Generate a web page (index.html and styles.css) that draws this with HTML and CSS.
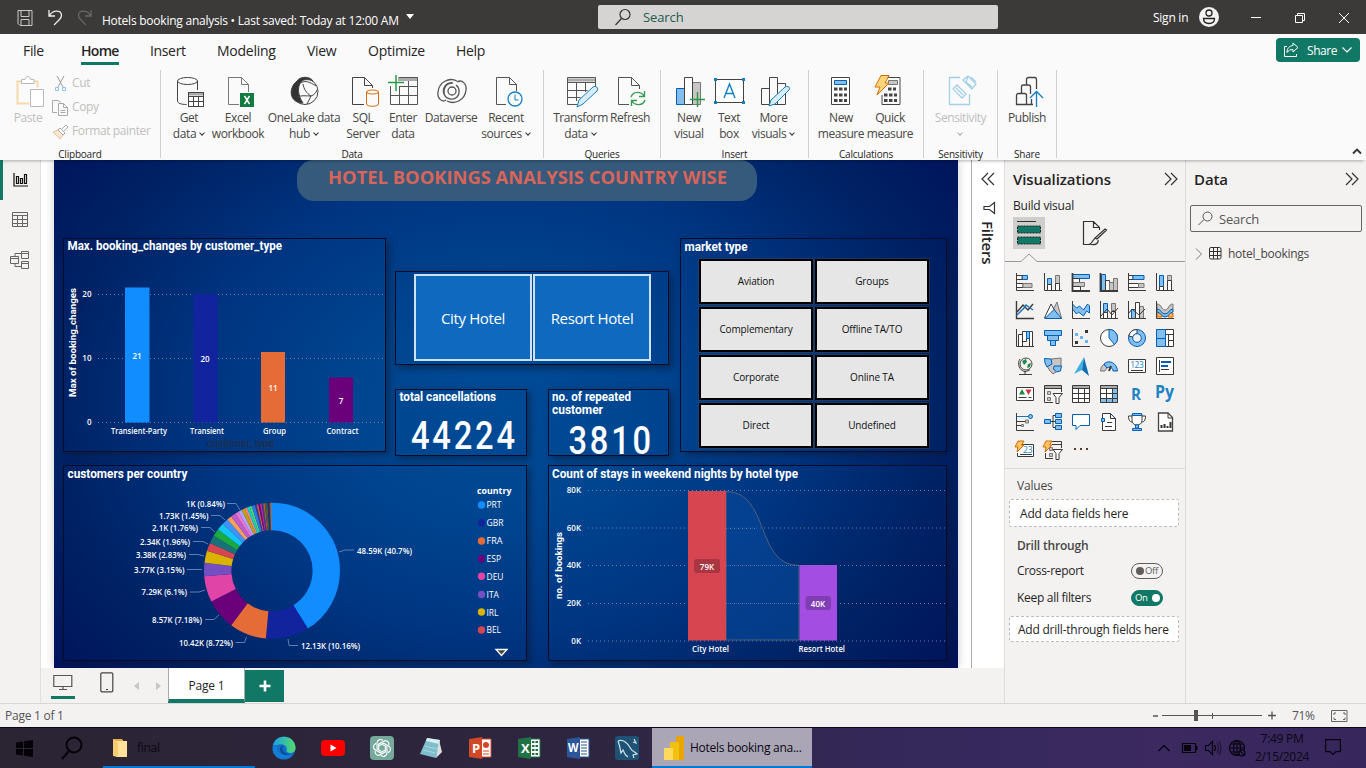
FILE: index.html
```html
<!DOCTYPE html>
<html lang="en">
<head>
<meta charset="utf-8">
<title>Hotels booking analysis</title>
<link rel="stylesheet" href="styles.css">
</head>
<body>
<div class="app">
<header class="titlebar">
  <svg class="tb-icons" width="84" height="34" viewBox="14 0 84 34" fill="none" stroke="#f0efee">
    <path d="M18 10.500h14v15H20l-2-2zM21 10.500v6h8v-6M21 25v-5.500h8V25" stroke="#c9c8c7"/>
    <path d="M49 10v6h6M49.500 15.500C53 9.500 61 10 61.500 15c.2 2-1 3.500-2.500 5l-5 5" stroke-width="1.300"/>
    <path d="M91 10v6h-6M90.500 15.500C87 9.500 79 10 78.500 15c-.2 2 1 3.500 2.500 5l5 5" stroke="#696765" stroke-width="1.300"/>
  </svg>
  <div class="doc-name">Hotels booking analysis • Last saved: Today at 12:00 AM</div>
  <svg class="caret" width="10" height="6" viewBox="0 0 10 6"><path d="M1 0h8L5 5z" fill="#fff"/></svg>
  <div class="top-search">
    <svg width="18" height="18" viewBox="0 0 18 18" fill="none" stroke="#333" stroke-width="1.200"><circle cx="11" cy="6.500" r="5"/><path d="M7.500 10.500L1.500 17"/></svg>
    <span>Search</span>
  </div>
  <div class="sign-in">Sign in</div>
  <svg class="avatar" width="20" height="20" viewBox="0 0 20 20"><circle cx="10" cy="10" r="10" fill="#f3f2f1"/><circle cx="10" cy="6" r="3" fill="none" stroke="#222" stroke-width="1.300"/><path d="M4.500 11.500h11c0 3.300-2.300 5-5.500 5s-5.500-1.700-5.500-5z" fill="none" stroke="#222" stroke-width="1.300"/></svg>
  <svg class="win-ctl" width="100" height="34" viewBox="1250 0 100 34" fill="none" stroke="#fff"><path d="M1251 17.500h10M1295.500 15.500h7v7h-7zM1297.500 15.500v-2h7v7h-2M1339 13l10 10M1349 13l-10 10"/></svg>
</header>

<nav class="tabs">
  <a class="tab t-file">File</a><a class="tab t-home current">Home</a><a class="tab t-insert">Insert</a><a class="tab t-model">Modeling</a><a class="tab t-view">View</a><a class="tab t-opt">Optimize</a><a class="tab t-help">Help</a>
  <div class="share">
    <svg width="17" height="16" viewBox="0 0 17 16" fill="none" stroke="#fff"><path d="M4 4.500H1.500v10h12V12"/><path d="M10 1l5 4.500L10 10V7.500c-3 0-4.500 1-6 3 0-4 2-6.500 6-7z"/></svg>
    <span>Share</span>
    <svg width="10" height="6" viewBox="0 0 10 6" fill="none" stroke="#fff" stroke-width="1.200"><path d="M.5.5L5 5 9.500.5"/></svg>
  </div>
</nav>

<section class="ribbon">
  <div class="group g-clip">
    <div class="buttons">
      <div class="btn w-paste off"><svg width="32" height="32" viewBox="12 74 32 32" fill="none"><path d="M21 80.500h-3.500v22H29" stroke="#f5d9a8" stroke-width="2"/><path d="M34 80.500h3.500v6" stroke="#f5d9a8" stroke-width="2"/><path d="M21.500 82.500v-4H25c0-4 5.500-4 5.500 0H34v4zM30.500 88.500h13v17h-13z" fill="#fff" stroke="#b9b9b9"/></svg><span>Paste</span></div>
      <div class="clip-list off">
        <div><svg width="17" height="17" viewBox="0 0 17 17" fill="none"><path d="M5 1l6 11M12 1L6 12" stroke="#999"/><path d="M3.500 12.500h3v3h-3zM10.500 12.500h3v3h-3z" stroke="#8cc1e8"/></svg>Cut</div>
        <div><svg width="17" height="17" viewBox="0 0 17 17" fill="none" stroke="#aaa"><path d="M5 13.500H.5V1.500H6l3 2"/><path d="M6.500 4.500h5l4 4v8h-9zM11.500 4.500v4h4M8.500 11.500h5M8.500 13.500h5"/></svg>Copy</div>
        <div><svg width="17" height="17" viewBox="0 0 17 17" fill="none"><path d="M1 9l5-2 5 5-3 4z" fill="#fbe6cf" stroke="#edbd92"/><path d="M6 7l2-2 5 5-2 2zM10 6l4-4 2 2-4 4" stroke="#aaa"/></svg>Format painter</div>
      </div>
    </div>
    <div class="gname">Clipboard</div>
  </div>

  <div class="group g-data">
    <div class="buttons">
      <div class="btn w42"><svg width="32" height="32" viewBox="0 0 32 32" fill="none" stroke="#444"><ellipse cx="14.500" cy="6" rx="10" ry="3.500"/><path d="M4.500 6v20c0 2 3 3.500 9 3.500M24.500 6v9"/><path d="M15.500 17.500h15v14h-15z" fill="#fff"/><path d="M15 19h16" stroke-width="3" stroke="#aaa"/><path d="M15.500 17.500h15v14h-15zM15.500 21.500h15M15.500 26.500h15M20.500 21v10M25.500 21v10"/></svg><span>Get<br>data<i class="chev"></i></span></div>
      <div class="btn w56"><svg width="32" height="32" viewBox="0 0 32 32" fill="none" stroke="#777"><path d="M17 29.500H6.500v-27h13l7 7V17M19.500 2.500v7h7"/><path d="M18 18h14v14H18z" fill="#107c41" stroke="none"/><path d="M22.500 21l5 8M27.500 21l-5 8" stroke="#fff" stroke-width="1.500"/></svg><span>Excel<br>workbook</span></div>
      <div class="btn w76"><svg width="32" height="32" viewBox="0 0 32 32" fill="none" stroke="#444"><circle cx="17" cy="16.500" r="13"/><path d="M9 6C12 1 22 1 25 6c-5-2-9-2-12 1C9 12 10 21 15 28 1 28 0 13 9 6z" fill="#333"/><path d="M13 8c4-3 9-1 15 3M15 9c1 5 3 9 8 12M9 22c5-2 9-1 14-1 3-1 5-3 6-6M23 21l-4 8"/></svg><span>OneLake data<br>hub<i class="chev"></i></span></div>
      <div class="btn w42"><svg width="32" height="32" viewBox="0 0 32 32" fill="none" stroke="#444"><path d="M17 29.500H5.500v-27h12l8 8V13M17.500 2.500v8h8"/><ellipse cx="25.500" cy="17" rx="6" ry="2" stroke="#d8690a"/><path d="M19.500 17v12c0 3 12 3 12 0V17" stroke="#d8690a"/></svg><span>SQL<br>Server</span></div>
      <div class="btn w38"><svg width="32" height="32" viewBox="0 0 32 32" fill="none" stroke="#555"><path d="M11 4h20" stroke="#aaa" stroke-width="4"/><path d="M12 2.500h18.500v27h-27V11M3.500 20.500h27M12 11.500h18.500M12.500 12v17M21.500 6v23"/><path d="M9 0v16M1 7.500h16" stroke="#259b48" stroke-width="1.500"/></svg><span>Enter<br>data</span></div>
      <div class="btn w58"><svg width="32" height="32" viewBox="0 0 32 32" fill="none" stroke="#555" stroke-width="1.300"><circle cx="17" cy="16" r="4"/><path d="M18 8c-7-1-11 5-9 11 2 5 9 7 13 3 3-3 3-9-1-12"/><path d="M22 6c-8-4-18 1-19 11-1 6 4 11 8 8M12 26c8 4 18-1 19-11 1-6-4-11-9-8M9 19c-1-5 2-11 8-11"/></svg><span>Dataverse</span></div>
      <div class="btn w52"><svg width="32" height="32" viewBox="0 0 32 32" fill="none" stroke="#555"><path d="M16 29.500H6.500v-27h13l7 7V16M19.500 2.500v7h7"/><circle cx="25" cy="24" r="7" fill="#fafafa" stroke="#147fc4" stroke-width="1.300"/><path d="M25 19.500V25h3.500" stroke="#147fc4"/></svg><span>Recent<br>sources<i class="chev"></i></span></div>
    </div>
    <div class="gname">Data</div>
  </div>

  <div class="group g-query">
    <div class="buttons">
      <div class="btn w55"><svg width="32" height="32" viewBox="0 0 32 32" fill="none" stroke="#555"><path d="M3 5h27" stroke="#aaa" stroke-width="3"/><path d="M2.500 2.500h28v5h-28zM2.500 7v22.500h10M30.500 7v4M2.500 15.500h20M2.500 22.500h13M11.500 7v19M20.500 7v10"/><path d="M12 32l2-7L28 12c3-2 6 1 4 4L18 29z" fill="#d9ecfa" stroke="#147fc4"/></svg><span>Transform<br>data<i class="chev"></i></span></div>
      <div class="btn w44"><svg width="32" height="32" viewBox="0 0 32 32" fill="none" stroke="#555"><path d="M15 29.500H4.500v-27h13l8 8V14M17.500 2.500v8h8"/><path d="M17 22c2-6 10-6 13-1M30.500 16v5.500H25M31 25c-2 6-10 6-13 1M17.500 31v-5.500H23" stroke="#359a50" stroke-width="1.400"/></svg><span>Refresh</span></div>
    </div>
    <div class="gname">Queries</div>
  </div>

  <div class="group g-ins">
    <div class="buttons">
      <div class="btn w40"><svg width="32" height="32" viewBox="0 0 32 32" fill="none" stroke="#444"><path class="b" d="M3.500 13.500h8v16h-8z"/><path class="g" d="M19.500 7.500h8v22h-8z"/><path d="M11.500 2.500h8v27h-8z" fill="#fff"/><path d="M24.500 17v15M17 24.500h15" stroke="#259b48" stroke-width="1.400"/></svg><span>New<br>visual</span></div>
      <div class="btn w40"><svg width="32" height="32" viewBox="0 0 32 32"><path d="M2.500 4.500h28v23h-28z" fill="#fff" stroke="#444"/><path d="M1 3h3v3H1zM29 3h3v3h-3zM1 26h3v3H1zM29 26h3v3h-3z" fill="#147fc4"/><path d="M11 23L16.500 9 22 23M13 18.500h7" fill="none" stroke="#147fc4" stroke-width="1.400"/></svg><span>Text<br>box</span></div>
      <div class="btn w49"><svg width="32" height="32" viewBox="0 0 32 32" fill="none" stroke="#444"><path d="M3.500 13.500h8v16h-8zM11.500 2.500h8v27h-8zM19.500 8.500h8v21h-8z"/><path d="M11 31l2-6L27 12c3-2 6 1 4 3L17 29z" fill="#d9ecfa" stroke="#147fc4"/></svg><span>More<br>visuals<i class="chev"></i></span></div>
    </div>
    <div class="gname">Insert</div>
  </div>

  <div class="group g-calc">
    <div class="buttons">
      <div class="btn w48"><svg width="32" height="32" viewBox="0 0 32 32" fill="none" stroke="#444"><path d="M6.500 2.500h18v27h-18z" fill="#fff"/><path class="b" d="M9.500 5.500h12v4h-12z"/><path d="M9 14h3.500m1.500 0h3.500m1.500 0h3M9 20h3.500m1.500 0h3.500m1.500 0h3M9 25.500h3.500m1.500 0h3.500m1.500 0h3" stroke-width="3"/></svg><span>New<br>measure</span></div>
      <div class="btn w50"><svg width="32" height="32" viewBox="0 0 32 32" fill="none" stroke="#444"><path d="M6.500 12V2.500h18v27h-18V20" transform="translate(1.500)"/><path class="g" d="M14.500 5.500h9v4h-9z"/><path d="M10 20h3.500m1.500 0h3.500m1.500 0h3M14 14h3.500m1.500 0h3M10 25.500h3.500m1.500 0h3.500m1.500 0h3" stroke-width="3"/><path d="M7 .5h8L11 8h4L3 20l3-8H1z" fill="#ffd67a" stroke="#d8690a"/></svg><span>Quick<br>measure</span></div>
    </div>
    <div class="gname">Calculations</div>
  </div>

  <div class="group g-sens">
    <div class="buttons">
      <div class="btn w73 off"><svg width="32" height="32" viewBox="0 0 32 32" fill="none" stroke="#a4cfe8" stroke-width="1.300"><path d="M15 2.500H4.500v27h20V19"/><path d="M8 14l4-4 9 9-4 4zM11 13l7 7M18 5l5-4 8 8-4 5zM23 1l-2 6 6 5M26 2l5 5"/></svg><span>Sensitivity<br><i class="chev lone"></i></span></div>
    </div>
    <div class="gname">Sensitivity</div>
  </div>

  <div class="group g-share">
    <div class="buttons">
      <div class="btn w58"><svg width="32" height="32" viewBox="0 0 32 32" fill="none" stroke="#444" stroke-width="1.300"><path d="M5.500 29.500v-9q0-2 2-2h6q2 0 2 2v9zM10.500 18v-6q0-2 2-2h5q2 0 2 2v7M15.500 10V4.500q0-2 2-2h6q2 0 2 2V14M15 29.500h7M20.500 24v5"/><path d="M25.500 32V17M19 23l6.500-6.500L32 23" stroke="#147fc4"/></svg><span>Publish</span></div>
    </div>
    <div class="gname">Share</div>
  </div>
  <svg class="collapse" width="10" height="7" viewBox="0 0 10 7" fill="none" stroke="#333" stroke-width="1.800"><path d="M1 5.500l4-4 4 4"/></svg>
</section>

<main class="main">
  <aside class="rail">
    <div class="rail-item on"><svg width="18" height="18" viewBox="0 0 18 18" fill="none" stroke="#111" stroke-width="1.200"><path d="M2 2v13h14M4.500 5.500h2v7h-2zM8.500 7.500h2v5h-2zM12.500 3.500h2v9h-2z"/></svg></div>
    <div class="rail-item"><svg width="18" height="18" viewBox="0 0 18 18" fill="none" stroke="#666"><path d="M1.500 1.500h15v14h-15zM1.500 4.500h15M1.500 8.500h15M1.500 12.500h15M6.500 4v12M11.500 4v12"/></svg></div>
    <div class="rail-item"><svg width="20" height="20" viewBox="0 0 20 20" fill="none" stroke="#666"><path d="M.5 6.500h8v7h-8zM.5 8.500h8M11.500 1.500h7v7h-7zM11.500 3.500h7M11.500 11.500h7v7h-7zM11.500 13.500h7M5 6V3.500h6M5 14v2.500h6"/></svg></div>
  </aside>

  <section class="center">
    <div class="stage">
      <div class="report">
        <div class="banner"><svg width="460" height="41" viewBox="297 160 460 41"><text x="328" y="184" class="banner-text" textLength="399" lengthAdjust="spacingAndGlyphs">HOTEL BOOKINGS ANALYSIS COUNTRY WISE</text></svg></div>
        <div class="row top-row">
          <div class="visual v-bars">
            <svg width="321" height="212" viewBox="64 239 321 212">
              <text class="vt" x="67.500" y="250" textLength="214.500" lengthAdjust="spacingAndGlyphs">Max. booking_changes by customer_type</text>
              <path class="grid" d="M98 294.500H384M98 358.500H384M98 422.500H384"/>
              <path d="M125 287.500h24.500v135H125z" fill="#118dff"/><path d="M193.500 294h24v128.500h-24z" fill="#12239e"/><path d="M261 352h24v70.500h-24z" fill="#e66c37"/><path d="M329 377.500h24v45h-24z" fill="#6b007b"/>
              <g class="lab mid"><text x="137" y="359">21</text><text x="205" y="362">20</text><text x="273" y="391">11</text><text x="341" y="404">7</text></g>
              <g class="lab end"><text x="91.500" y="297">20</text><text x="91.500" y="361">10</text><text x="91.500" y="425">0</text></g>
              <g class="lab"><text x="111" y="434" textLength="56" lengthAdjust="spacingAndGlyphs">Transient-Party</text><text x="190" y="434" textLength="34" lengthAdjust="spacingAndGlyphs">Transient</text><text x="263" y="434" textLength="23" lengthAdjust="spacingAndGlyphs">Group</text><text x="326.500" y="434" textLength="32" lengthAdjust="spacingAndGlyphs">Contract</text></g>
              <text x="207" y="447" class="xt" textLength="67" lengthAdjust="spacingAndGlyphs">customer_type</text>
              <text class="yt" transform="translate(76 397) rotate(-90)" textLength="109" lengthAdjust="spacingAndGlyphs">Max of booking_changes</text>
            </svg>
          </div>
          <div class="mid-col">
            <div class="visual v-slicer"><div class="tile">City Hotel</div><div class="tile">Resort Hotel</div></div>
            <div class="cards">
              <div class="visual v-card"><svg width="130" height="64" viewBox="396 390 130 64"><text class="vt" x="399.500" y="401" textLength="96.500" lengthAdjust="spacingAndGlyphs">total cancellations</text><text class="big" transform="translate(411 448.500) scale(.86 1)" textLength="121">44224</text></svg></div>
              <div class="visual v-card narrow"><svg width="119" height="64" viewBox="549 390 119 64"><text class="vt" x="552" y="401" textLength="79" lengthAdjust="spacingAndGlyphs">no. of repeated</text><text class="vt" x="552" y="414" textLength="51" lengthAdjust="spacingAndGlyphs">customer</text><text class="big" transform="translate(568.500 453.500) scale(.86 1)" textLength="96">3810</text></svg></div>
            </div>
          </div>
          <div class="visual v-market">
            <svg width="120" height="20" viewBox="681 239 120 20"><text class="vt" x="684.500" y="251" textLength="63" lengthAdjust="spacingAndGlyphs">market type</text></svg>
            <div class="mgrid"><div>Aviation</div><div>Groups</div><div>Complementary</div><div>Offline TA/TO</div><div>Corporate</div><div>Online TA</div><div>Direct</div><div>Undefined</div></div>
          </div>
        </div>
        <div class="row bottom-row">
          <div class="visual v-donut">
            <svg width="462" height="194" viewBox="64 466 462 194">
              <text class="vt" x="67.500" y="478" textLength="120" lengthAdjust="spacingAndGlyphs">customers per country</text>
              <g transform="translate(272 570.800) rotate(-90)" fill="none" stroke-width="27.400">
                <circle r="54.300" pathLength="98.850" stroke="#118dff" stroke-dasharray="40.700 100"/>
                <circle r="54.300" pathLength="98.850" stroke="#12239e" stroke-dasharray="10.160 100" stroke-dashoffset="-40.700"/>
                <circle r="54.300" pathLength="98.850" stroke="#e66c37" stroke-dasharray="8.720 100" stroke-dashoffset="-50.860"/>
                <circle r="54.300" pathLength="98.850" stroke="#6b007b" stroke-dasharray="7.180 100" stroke-dashoffset="-59.580"/>
                <circle r="54.300" pathLength="98.850" stroke="#e044a7" stroke-dasharray="6.100 100" stroke-dashoffset="-66.760"/>
                <circle r="54.300" pathLength="98.850" stroke="#744ec2" stroke-dasharray="3.150 100" stroke-dashoffset="-72.860"/>
                <circle r="54.300" pathLength="98.850" stroke="#d9b300" stroke-dasharray="2.830 100" stroke-dashoffset="-76.010"/>
                <circle r="54.300" pathLength="98.850" stroke="#d64550" stroke-dasharray="1.960 100" stroke-dashoffset="-78.840"/>
                <circle r="54.300" pathLength="98.850" stroke="#197278" stroke-dasharray="1.860 100" stroke-dashoffset="-80.800"/>
                <circle r="54.300" pathLength="98.850" stroke="#1aab40" stroke-dasharray="1.760 100" stroke-dashoffset="-82.660"/>
                <circle r="54.300" pathLength="98.850" stroke="#15c6f4" stroke-dasharray="1.740 100" stroke-dashoffset="-84.420"/>
                <circle r="54.300" pathLength="98.850" stroke="#4092ff" stroke-dasharray="1.450 100" stroke-dashoffset="-86.160"/>
                <circle r="54.300" pathLength="98.850" stroke="#ffa058" stroke-dasharray="1.100 100" stroke-dashoffset="-87.610"/>
                <circle r="54.300" pathLength="98.850" stroke="#be5dc9" stroke-dasharray="1.200 100" stroke-dashoffset="-88.710"/>
                <circle r="54.300" pathLength="98.850" stroke="#f472d0" stroke-dasharray=".8 100" stroke-dashoffset="-89.910"/>
                <circle r="54.300" pathLength="98.850" stroke="#b5a1ff" stroke-dasharray=".84 100" stroke-dashoffset="-90.710"/>
                <circle r="54.300" pathLength="98.850" stroke="#c4a200" stroke-dasharray=".8 100" stroke-dashoffset="-91.550"/>
                <circle r="54.300" pathLength="98.850" stroke="#ff8080" stroke-dasharray=".6 100" stroke-dashoffset="-92.350"/>
                <circle r="54.300" pathLength="98.850" stroke="#00dbbc" stroke-dasharray=".6 100" stroke-dashoffset="-92.950"/>
                <circle r="54.300" pathLength="98.850" stroke="#5bd667" stroke-dasharray=".5 100" stroke-dashoffset="-93.550"/>
                <circle r="54.300" pathLength="98.850" stroke="#2a7be0" stroke-dasharray=".8 100" stroke-dashoffset="-94.050"/>
                <circle r="54.300" pathLength="98.850" stroke="#3a36a8" stroke-dasharray=".4 100" stroke-dashoffset="-94.850"/>
                <circle r="54.300" pathLength="98.850" stroke="#d9622b" stroke-dasharray=".4 100" stroke-dashoffset="-95.250"/>
                <circle r="54.300" pathLength="98.850" stroke="#77008c" stroke-dasharray=".4 100" stroke-dashoffset="-95.650"/>
                <circle r="54.300" pathLength="98.850" stroke="#c02585" stroke-dasharray=".4 100" stroke-dashoffset="-96.050"/>
                <circle r="54.300" pathLength="98.850" stroke="#4f3599" stroke-dasharray=".35 100" stroke-dashoffset="-96.450"/>
                <circle r="54.300" pathLength="98.850" stroke="#8b7520" stroke-dasharray=".35 100" stroke-dashoffset="-96.800"/>
                <circle r="54.300" pathLength="98.850" stroke="#9b3640" stroke-dasharray=".35 100" stroke-dashoffset="-97.150"/>
                <circle r="54.300" pathLength="98.850" stroke="#147a4b" stroke-dasharray=".3 100" stroke-dashoffset="-97.500"/>
                <circle r="54.300" pathLength="98.850" stroke="#223066" stroke-dasharray=".3 100" stroke-dashoffset="-97.800"/>
                <circle r="54.300" pathLength="98.850" stroke="#70264d" stroke-dasharray=".3 100" stroke-dashoffset="-98.100"/>
                <circle r="54.300" pathLength="98.850" stroke="#777b77" stroke-dasharray=".45 100" stroke-dashoffset="-98.400"/>
              </g>
              <path d="M339 552l6-2h9M288 639l1 6.500h9M246.500 637l-2 5.500h-9M219 615l-5 4.500h-9M205 590l-6 2h-9M202 569.500h-15M204 556l-6-1.500h-9M208 544l-5-2.500h-10M215 532l-5-4.500h-9M225 520l-5-4.500h-9M240 510l-4-6.500h-9" fill="none" stroke="#5f7fae"/>
              <g class="lab">
                <text x="357" y="554" textLength="55" lengthAdjust="spacingAndGlyphs">48.59K (40.7%)</text>
                <text x="301" y="649" textLength="59" lengthAdjust="spacingAndGlyphs">12.13K (10.16%)</text>
                <text x="179" y="646" textLength="54" lengthAdjust="spacingAndGlyphs">10.42K (8.72%)</text>
                <text x="152" y="623" textLength="50" lengthAdjust="spacingAndGlyphs">8.57K (7.18%)</text>
                <text x="141.500" y="595" textLength="45.500" lengthAdjust="spacingAndGlyphs">7.29K (6.1%)</text>
                <text x="134" y="573" textLength="50.500" lengthAdjust="spacingAndGlyphs">3.77K (3.15%)</text>
                <text x="136" y="558" textLength="50" lengthAdjust="spacingAndGlyphs">3.38K (2.83%)</text>
                <text x="140" y="545" textLength="50" lengthAdjust="spacingAndGlyphs">2.34K (1.96%)</text>
                <text x="152" y="531" textLength="46" lengthAdjust="spacingAndGlyphs">2.1K (1.76%)</text>
                <text x="159" y="519" textLength="49.500" lengthAdjust="spacingAndGlyphs">1.73K (1.45%)</text>
                <text x="186" y="507" textLength="39" lengthAdjust="spacingAndGlyphs">1K (0.84%)</text>
              </g>
              <text x="477" y="494" class="leg-t" textLength="34.500" lengthAdjust="spacingAndGlyphs">country</text>
              <g>
                <circle cx="481.500" cy="505" r="3.700" fill="#118dff"/><circle cx="481.500" cy="522.700" r="3.700" fill="#12239e"/><circle cx="481.500" cy="541" r="3.700" fill="#e66c37"/><circle cx="481.500" cy="558.700" r="3.700" fill="#6b007b"/><circle cx="481.500" cy="576.300" r="3.700" fill="#e044a7"/><circle cx="481.500" cy="594.500" r="3.700" fill="#744ec2"/><circle cx="481.500" cy="612" r="3.700" fill="#d9b300"/><circle cx="481.500" cy="630" r="3.700" fill="#d64550"/>
              </g>
              <g class="leg">
                <text x="486.500" y="508" textLength="15" lengthAdjust="spacingAndGlyphs">PRT</text><text x="486.500" y="526" textLength="17" lengthAdjust="spacingAndGlyphs">GBR</text><text x="486.500" y="544" textLength="16" lengthAdjust="spacingAndGlyphs">FRA</text><text x="486.500" y="562" textLength="14.500" lengthAdjust="spacingAndGlyphs">ESP</text><text x="486.500" y="580" textLength="17" lengthAdjust="spacingAndGlyphs">DEU</text><text x="486.500" y="598" textLength="12.500" lengthAdjust="spacingAndGlyphs">ITA</text><text x="486.500" y="616" textLength="12" lengthAdjust="spacingAndGlyphs">IRL</text><text x="486.500" y="633" textLength="14.500" lengthAdjust="spacingAndGlyphs">BEL</text>
              </g>
              <path d="M496 649.500h11l-5.500 6z" fill="#444" stroke="#fff" stroke-width="1.300"/>
            </svg>
          </div>
          <div class="visual v-ribbon">
            <svg width="397" height="194" viewBox="549 466 397 194">
              <text class="vt" x="552" y="478" textLength="246" lengthAdjust="spacingAndGlyphs">Count of stays in weekend nights by hotel type</text>
              <path class="grid" d="M588 490.500H946M588 528H946M588 565.500H946M588 603.500H946M588 641H946"/>
              <path d="M726 491.500C770 491.500 755 565.500 799 565.500V640H726z" fill="#07489a" fill-opacity=".62" stroke="#50607a"/>
              <path class="grid" d="M726 528.500H757M726 565.500H799M726 603.500H799"/>
              <path d="M688 491h38v149.500h-38z" fill="#d64550"/><path d="M799.500 565h37.500v75.500h-37.500z" fill="#a44de3"/>
              <rect x="694" y="559" width="26" height="14" rx="3" fill="#a93640"/><rect x="805.500" y="596" width="25.500" height="14" rx="3" fill="#813db3"/>
              <g class="lab mid"><text x="707" y="570">79K</text><text x="818" y="607">40K</text></g>
              <g class="lab end"><text x="581" y="493">80K</text><text x="581" y="531">60K</text><text x="581" y="568">40K</text><text x="581" y="606">20K</text><text x="581" y="644">0K</text></g>
              <g class="lab"><text x="692" y="652" textLength="37" lengthAdjust="spacingAndGlyphs">City Hotel</text><text x="798.500" y="652" textLength="46.500" lengthAdjust="spacingAndGlyphs">Resort Hotel</text></g>
              <text class="yt" transform="translate(561.500 599) rotate(-90)" textLength="67" lengthAdjust="spacingAndGlyphs">no. of bookings</text>
            </svg>
          </div>
        </div>
      </div>
      <aside class="filters">
        <svg width="14" height="14" viewBox="0 0 14 14" fill="none" stroke="#333" stroke-width="1.200"><path d="M7 1L1 7l6 6M13 1L7 7l6 6"/></svg>
        <svg width="14" height="14" viewBox="0 0 14 14" fill="none" stroke="#333" stroke-width="1.200"><path d="M12.500 1.500v11l-5-4H2v-3h5.500z" transform="translate(1 1)"/></svg>
        <span>Filters</span>
      </aside>
    </div>
    <div class="pages">
      <div class="view on"><svg width="20" height="17" viewBox="0 0 20 17" fill="none" stroke="#555" stroke-width="1.200"><path d="M.8 1.500h18v11H.8zM10 12.500V16M6 15.500h8"/></svg></div>
      <div class="view v2"><svg width="14" height="21" viewBox="0 0 14 21" fill="none" stroke="#444" stroke-width="1.200"><rect x=".8" y=".8" width="12" height="19" rx="1"/><path d="M6 17.500h2"/></svg></div>
      <svg class="arrows" width="28" height="10" viewBox="0 0 28 10" fill="#c8c6c4"><path d="M5 1v8L0 5zM22 1v8l5-4z"/></svg>
      <div class="page-tab">Page 1</div>
      <div class="add"><svg width="12" height="12" viewBox="0 0 12 12"><path d="M6 .5v11M.5 6h11" stroke="#fff" stroke-width="2.600"/></svg></div>
    </div>
  </section>

  <aside class="pane viz">
    <div class="pane-head"><h2>Visualizations</h2><svg width="14" height="14" viewBox="0 0 14 14" fill="none" stroke="#333" stroke-width="1.200"><path d="M1 1l6 6-6 6M7 1l6 6-6 6"/></svg></div>
    <div class="build">Build visual</div>
    <div class="modes">
      <div class="mode on"><svg width="24" height="26" viewBox="0 0 24 26"><path d="M0 1.500h19" stroke="#333"/><path d="M.5 6h23v7H.5zM.5 17h23v7H.5z" fill="#117865" stroke="#222" stroke-dasharray="2 1"/></svg></div>
      <div class="mode"><svg width="26" height="26" viewBox="0 0 26 26" fill="none" stroke="#333" stroke-width="1.200"><path d="M8 24.500H1.500v-23h10l6 6V10M11.500 1.500v6h6M24.500 10L15 19l-2-1L23 9zM14 18c-3 0-3 5-6 6 5 2 9-1 8-4"/></svg></div>
    </div>
    <svg class="notch" width="181" height="10" viewBox="0 0 181 10" fill="none" stroke="#999"><path d="M0 8.500h16l8-7.500 8 7.500h149"/></svg>
    <div class="gallery">
      <svg viewBox="0 0 18 18"><path class="b" d="M.5 2.500h11v4H6M6 2.500v4"/><path class="w" d="M.5 2.500H6v4H.5zM.5 10.500H7v4H.5z"/><path class="g" d="M7 10.500h9v4H7z"/><path class="l" d="M.5 0v17.500H18"/></svg>
      <svg viewBox="0 0 18 18"><path class="b" d="M3.500 5.500h4v6h-4z"/><path class="g" d="M11.500 2.500h4v8h-4z"/><path class="w" d="M3.500 11.500h4v6h-4zM11.500 10.500h4v7h-4z"/><path class="l" d="M.5 0v17.500H18"/></svg>
      <svg viewBox="0 0 18 18"><path class="b" d="M.5 1.500h17v4H.5z"/><path class="w" d="M.5 5.500h7v4h-7z"/><path class="g" d="M.5 9.500h12v4H.5z"/><path class="w" d="M.5 13.500h8v4h-8z"/><path class="l" d="M.5 0v18H18" stroke-width="1.800"/></svg>
      <svg viewBox="0 0 18 18"><path class="b" d="M1.500 1.500h4v16h-4z"/><path class="w" d="M5.500 7.500h4v10h-4z"/><path class="g" d="M9.500 9.500h4v8h-4zM13.500 5.500h4v12h-4z"/><path class="l" d="M.5 0v18H18" stroke-width="1.800"/></svg>
      <svg viewBox="0 0 18 18"><path class="w" d="M.5 2.500H5v4H.5zM.5 10.500h10v4H.5z"/><path class="b" d="M5 2.500h11v4H5z"/><path class="g" d="M10.500 10.500H16v4h-5.500z"/><path class="l" d="M.5 0v17.500H18"/></svg>
      <svg viewBox="0 0 18 18"><path class="b" d="M3.500 2.500h4v11h-4z"/><path class="g" d="M11.500 2.500h4v5h-4z"/><path class="w" d="M3.500 13.500h4v4h-4zM11.500 7.500h4v10h-4z"/><path class="l" d="M.5 0v17.500H18"/></svg>

      <svg viewBox="0 0 18 18"><path class="l" stroke-width="1.400" d="M.5 0v17.500H18M1 11l6-7 5 5 5-6"/><path class="bl" stroke-width="1.400" d="M1 14l7-7 2-3 7 5"/></svg>
      <svg viewBox="0 0 18 18"><path class="g" d="M5 17L13 1l4.500 16z"/><path class="w" d="M.5 17L7 3l8 14z"/><path class="b" d="M1 17.500l6-6 3-3 7.500 9z"/></svg>
      <svg viewBox="0 0 18 18"><path class="b" d="M.5 3l4 4 3-2 4 4 4-6 2 2v7l-3-2-3 5-5-4-2 2-4-5z"/><path class="l" d="M.5 0v17.500H18"/></svg>
      <svg viewBox="0 0 18 18"><path class="b" d="M3.500 2.500h4v9h-4z"/><path class="g" d="M11.500 2.500h4v7h-4z"/><path class="w" d="M3.500 11.500h4v6h-4zM11.500 10.500h4v7h-4z"/><path class="l" d="M.5 0v17.500H18M1 15l6-7 5 6 6-7"/></svg>
      <svg viewBox="0 0 18 18"><path class="b" d="M3.500 8.500h4v9h-4z"/><path class="g" d="M11.500 5.500h4v12h-4z"/><path class="w" d="M7.500 1.500h4v16h-4z"/><path class="l" d="M.5 0v17.500H18M1 12l3-4 7 6 6-6"/></svg>
      <svg viewBox="0 0 18 18"><path d="M1 12h5v4H1zM12 12h5v4h-5z" fill="#f8b54b" stroke="#d8690a"/><path class="g" d="M1 3c5 0 4 6 8 6s3-6 8-6v5c-4 0-4 5-8 5s-4-5-8-5z"/><path class="b" d="M1 8c4 0 4 5 8 5s4-5 8-5v3c-4 0-4 5-8 5s-4-5-8-5z"/><path class="l" d="M.5 0v17.500H18"/></svg>

      <svg viewBox="0 0 18 18"><path class="w" d="M2.500 5.500h4v12h-4zM6.500 2.500h4v10h-4zM13.500 2.500h3v15h-3z"/><path class="b" d="M10.500 2.500h3v7h-3z"/><path class="l" d="M.5 0v17.500H18"/></svg>
      <svg viewBox="0 0 18 18"><path class="b" d="M.5 1.500h17v5H.5zM3.500 6.500h11v5h-11zM6.500 11.500h5v5h-5z"/></svg>
      <svg viewBox="0 0 18 18"><path d="M3 4h3v3H3zM8 7h3v3H8zM13 11h3v3h-3z" fill="#6db3eb"/><path d="M13 1h3v3h-3zM3 12h3v3H3z" fill="#333"/><path class="l" d="M.5 0v17.500H18"/></svg>
      <svg viewBox="0 0 18 18"><circle class="w" cx="9" cy="9" r="8.500"/><path class="b" d="M9 .5V9l5.500 6.500A8.500 8.500 0 0 0 9 .5z"/></svg>
      <svg viewBox="0 0 18 18"><circle class="b" cx="9" cy="9" r="8.500"/><path class="w" d="M9 .5A8.500 8.500 0 0 0 .8 7l4 1A4.300 4.300 0 0 1 9 4.700z"/><circle cx="9" cy="9" r="4.300" fill="#f3f2f1" stroke="#005fb7"/></svg>
      <svg viewBox="0 0 18 18"><path class="w" d="M9.500.5h8v17h-8zM9.500 5.500h8M12.500 5.500v12M12.500 11.500h5"/><path class="b" d="M.5.5h9v17h-9zM.5 9.500h9"/></svg>

      <svg viewBox="0 0 18 18"><circle cx="10" cy="7" r="6" fill="#f3f2f1" stroke="#444"/><path d="M6 4l4-2 1 3-3 3zM12 7l3-1-1 4-3 1z" fill="#208a48"/><path class="l" d="M4 2C1 6 3 14 9 14.500c2 0 4-1 5-2M9 14v3M3 17.500h13"/></svg>
      <svg viewBox="0 0 18 18"><path class="g" d="M7 2l10-1v8l-5 6-3 2-3-3-3-5 4-2z"/><path class="b" d="M.5 1.500L7 2l1 5-5 3-2-4zM10 9h7.500l-1 5-4 1-3-3z"/></svg>
      <svg viewBox="0 0 18 18"><path d="M12 0L2 17l8-4z" fill="#41b1df"/><path d="M12 0l5 19-7-6z" fill="#116bb4"/></svg>
      <svg viewBox="0 0 18 18"><path class="g" d="M.5 14A8.500 8.500 0 0 1 4 7l3 4-2 3z"/><path class="b" d="M4 7c5-5 13-1 13.500 7H13c0-3-3-5-6-3z"/><path class="l" d="M9 14l2-5" stroke-width="2"/></svg>
      <svg viewBox="0 0 18 18"><path class="w" d="M.5 2.500h17v13H.5z"/><text x="2.300" y="11" class="ic" font-size="8.500" textLength="13.500">123</text><path class="l" d="M3 13.500h12"/></svg>
      <svg viewBox="0 0 18 18"><path class="w" d="M.5.500h17v17H.5zM3.500 3v12"/><path d="M5 5h10M5 9h7" stroke="#005fb7" stroke-width="2"/><path class="l" d="M5 12.500h8"/></svg>

      <svg viewBox="0 0 18 18"><path class="w" d="M.5 2.500h17v13H.5z"/><path d="M3 9.500L6 4l3 5.500z" fill="#208a48"/><path d="M9.500 4.500h6l-3 5.500z" fill="#d13438"/><path class="l" d="M2.500 12.500h8m2 0h3"/></svg>
      <svg viewBox="0 0 18 18"><path class="l" d="M9 17.500H.5V.5h17V7M.5 3.500h17"/><path d="M1 2h16" stroke="#aaa" stroke-width="2"/><path class="g" d="M3.500 6.500h3v3h-3zM3.500 12.500h3v3h-3z"/><path class="w" d="M9 8.500h9.500l-3.500 4v6h-3v-6z"/></svg>
      <svg viewBox="0 0 18 18"><path class="w" d="M.5.500h17v17H.5z"/><path d="M1 2h16" stroke="#aaa" stroke-width="2"/><path class="l" d="M.5 3.500h17M.5 8.500h17M.5 13.500h17M6.500 3.500v14M12.500 3.500v14"/></svg>
      <svg viewBox="0 0 18 18"><path class="w" d="M.5.500h17v17H.5z"/><path d="M12.500 3.500h5v14H.5v-4h12z" fill="#83beec"/><path d="M1 2h16" stroke="#aaa" stroke-width="2"/><path class="l" d="M.5.500h17v17H.5zM.5 3.500h17M.5 8.500h17M.5 13.500h17M6.500 3.500v14M12.500 3.500v14"/></svg>
      <svg viewBox="0 0 18 18"><text x="3" y="15" class="ic bold" font-size="16" textLength="10" lengthAdjust="spacingAndGlyphs">R</text></svg>
      <svg viewBox="0 0 18 18"><text x="-1" y="13" class="ic bold" font-size="17" textLength="19" lengthAdjust="spacingAndGlyphs">Py</text></svg>

      <svg viewBox="0 0 18 18"><path class="bl" d="M1 3.500h11"/><circle class="b" cx="14.500" cy="3.500" r="2"/><path class="l" d="M.5 0v17.500H18M1 8.500h8M1 12.500h5"/><path class="g" d="M9.500 7h3v3h-3zM5.500 11.500h2v2h-2z"/></svg>
      <svg viewBox="0 0 18 18"><path class="l" d="M6 8.500h6M9 2.500v12h3M9 2.500h3"/><path class="b" d="M.5 6.500h6v4h-6zM11.500.5h6v4h-6zM11.500 6.500h6v4h-6zM11.500 12.500h6v4h-6z"/></svg>
      <svg viewBox="0 0 18 18"><path d="M.5 1.500h17v11H8l-4 4v-4H.5z" fill="#fff" stroke="#0063b1"/></svg>
      <svg viewBox="0 0 18 18"><path class="w" d="M2.500.5h8l5 5v12h-13zM10.500.5v5h5M7 9.500h5M5 13.500h7"/><path class="b" d="M1.500 5.500h3v3h-3z"/></svg>
      <svg viewBox="0 0 18 18"><path class="w" d="M4 1.500h10v6c0 6-10 6-10 0zM4 3H.5c0 5 2 6 4 6M14 3h3.500c0 5-2 6-4 6"/><path class="b" d="M4.500.5h9v2h-9zM7.500 12h3v3h-3zM4.500 15.500h9v2h-9z"/></svg>
      <svg viewBox="0 0 18 18"><path d="M2.500 0H12l4.500 4.500V18h-14z" fill="#fff" stroke="#444" stroke-width="1.300"/><path d="M12 0v5h4.500" class="l"/><path d="M5.500 15v-3m3 3v-4m3 4v-2m3 2V9" stroke="#333" stroke-width="2"/></svg>

      <svg viewBox="0 0 18 18"><path class="w" d="M5 3.500h12.500v12H1.500V12"/><text x="7" y="12" class="ic" font-size="8.500">23</text><path class="l" d="M4 13.500h12"/><path d="M2 0h6L5.500 4H8L1 11l1-5h-3z" fill="#ffc65e" stroke="#d8690a"/></svg>
      <svg viewBox="0 0 18 18"><path class="l" d="M9 17.500H1.500V12M8 .5h9.500V7M8 3.500h10"/><path class="g" d="M5.500 12.500h3v3h-3zM5.500 6.500h3v3h-3z"/><path class="w" d="M9 8.500h9.500l-3.500 4v6h-3v-6z"/><path d="M2 0h6L5.500 4H8L1 11l1-5h-3z" fill="#ffc65e" stroke="#d8690a"/></svg>
      <svg viewBox="0 0 18 18"><path d="M2 7h2v2H2zM8 7h2v2H8zM14 7h2v2h-2z" fill="#5a3a2a"/></svg>
    </div>
    <div class="wells">
      <div class="lbl">Values</div>
      <div class="well">Add data fields here</div>
      <div class="lbl sub">Drill through</div>
      <div class="trow"><span>Cross-report</span><span class="toggle">Off</span></div>
      <div class="trow second"><span>Keep all filters</span><span class="toggle on">On</span></div>
      <div class="well w2">Add drill-through fields here</div>
    </div>
  </aside>

  <aside class="pane data">
    <div class="pane-head"><h2>Data</h2><svg width="14" height="14" viewBox="0 0 14 14" fill="none" stroke="#333" stroke-width="1.200"><path d="M1 1l6 6-6 6M7 1l6 6-6 6"/></svg></div>
    <div class="dsearch"><svg width="15" height="15" viewBox="0 0 15 15" fill="none" stroke="#555"><circle cx="9.500" cy="5.500" r="4.500"/><path d="M6 8.500L.5 14"/></svg>Search</div>
    <div class="table-row"><svg width="8" height="12" viewBox="0 0 8 12" fill="none" stroke="#777"><path d="M1 .5L6.500 6 1 11.500"/></svg><svg class="tbl" width="13" height="13" viewBox="0 0 13 13" fill="none" stroke="#333"><rect x=".5" y=".5" width="11.500" height="11.500" rx="1.500"/><path d="M.5 4.500H12M.5 8.500H12M4.500.5V12M8.500.5V12"/></svg><span>hotel_bookings</span></div>
  </aside>
</main>

<footer class="status">
  <span class="pg">Page 1 of 1</span>
  <svg width="126" height="23" viewBox="1152 704 126 23" fill="none" stroke="#555"><path d="M1153 716h5M1268 715.500h8M1272 711.500v8" stroke-width="1.300"/><path d="M1162 715.500h100M1212.500 713v6"/><path d="M1194 710h4v11h-4z" fill="#555" stroke="none"/></svg>
  <span class="pct">71%</span>
  <svg class="fit" width="17" height="13" viewBox="0 0 17 13" fill="none" stroke="#666"><path d="M.5.5h15.500v11H.5z"/><path d="M3 5V3h2M12 3h2v2M14 7.500v2h-2M5 9.500H3v-2"/></svg>
</footer>

<footer class="taskbar">
  <div class="tk start"><svg width="17" height="17" viewBox="0 0 17 17"><path d="M0 2.500L7 1.500V8H0zM8 1.300L17 0v8H8zM0 9h7v6.500l-7-1zM8 9h9v8l-9-1.300z" fill="#050308"/></svg></div>
  <div class="tk find"><svg width="24" height="24" viewBox="0 0 24 24" fill="none" stroke="#050308" stroke-width="2"><circle cx="14" cy="9" r="7.500"/><path d="M9 15l-7 8"/></svg></div>
  <div class="tk folder"><svg width="18" height="22" viewBox="0 0 18 22"><path d="M2 2h9l2 3v14H2z" fill="#e2ad48"/><path d="M5 4h11v16H5z" fill="#ffe19a"/><path d="M2 2l5 4v14l-5-1z" fill="#f5cc6e"/></svg><span>final</span></div>
  <div class="apps">
    <svg width="24" height="24" viewBox="0 0 24 24"><defs><linearGradient id="e1" x1="0" x2="1"><stop stop-color="#1b9fe8"/><stop offset="1" stop-color="#55db68"/></linearGradient></defs><circle cx="12" cy="12" r="11.500" fill="#116fc7"/><path d="M1 10C3-3 23-2 23.500 12c0 6-8 6-9 3 2-5-5-8-9-6-2 0-4 0-4.500 1z" fill="url(#e1)"/><path d="M5 10c-1 7 4 11 15 9-5 6-16 5-19-3-1-6 2-7 4-6z" fill="#127fd6"/><path d="M12 9c-4 4 0 9 6 9-5 3-11-1-10-6 1-2 2-3 4-3z" fill="#0b4d9d"/></svg>
    <svg width="24" height="24" viewBox="0 0 24 24"><rect y="4" width="24" height="16" rx="4" fill="#f00"/><path d="M9.500 8.500v7l6-3.500z" fill="#fff"/></svg>
    <svg width="24" height="24" viewBox="0 0 24 24"><rect width="24" height="24" rx="4" fill="#75a99b"/><g fill="none" stroke="#fff" stroke-width="1.100"><path id="k" d="M13 4.500c-2.500-2-6-.5-6 2.500v6l4.500 2.600"/><use href="#k" transform="rotate(60 12 12)"/><use href="#k" transform="rotate(120 12 12)"/><use href="#k" transform="rotate(180 12 12)"/><use href="#k" transform="rotate(240 12 12)"/><use href="#k" transform="rotate(300 12 12)"/></g></svg>
    <svg width="24" height="24" viewBox="0 0 24 24"><path d="M8 2l13 2-4 18-16-4z" fill="#7ebdcb"/><path d="M8 2l13 2-1 4L7 5z" fill="#d9eef0"/><path d="M20 4l3 12-6 6z" fill="#dbe0df"/><path d="M4 14l12 3M6 10l12 3" stroke="#a8d9df"/></svg>
    <svg width="24" height="24" viewBox="0 0 24 24"><path d="M12 3h11v18H12z" fill="#fff" stroke="#d24726"/><path d="M1 3l13-2v22L1 21z" fill="#d24726"/><circle cx="18" cy="9" r="3" fill="#d24726"/><path d="M15 15h6M15 18h6" stroke="#d24726"/><text x="4" y="17" class="letter">P</text></svg>
    <svg width="24" height="24" viewBox="0 0 24 24"><path d="M12 3h11v18H12z" fill="#fff" stroke="#207245"/><path d="M15 6h6m-6 4h6m-6 4h6m-6 4h6" stroke="#207245" stroke-width="2" stroke-dasharray="2.500 1"/><path d="M1 3l13-2v22L1 21z" fill="#207245"/><text x="4" y="17" class="letter">X</text></svg>
    <svg width="24" height="24" viewBox="0 0 24 24"><path d="M12 3h11v18H12z" fill="#fff" stroke="#2a5699"/><path d="M15 6h6m-6 3h6m-6 3h6m-6 3h6m-6 3h6" stroke="#2a5699"/><path d="M1 3l13-2v22L1 21z" fill="#2a5699"/><text x="2" y="16" class="letter wide" textLength="10.500" lengthAdjust="spacingAndGlyphs">W</text></svg>
    <svg width="24" height="24" viewBox="0 0 24 24"><rect width="24" height="24" rx="3" fill="#1e5375"/><path d="M3 5c5-2 10 2 13 8 1 2 4 3 6 5l-4 1 1 3M3 5c2 5 2 8 3 12l2-3c1 3 2 5 5 7M19 3l2 4-3-1" fill="none" stroke="#cfe0e8" stroke-width="1.200"/></svg>
  </div>
  <div class="tk running"><svg width="20" height="24" viewBox="0 0 20 24"><rect x="12" width="8" height="24" rx="1" fill="#e8a500"/><rect x="6" y="6" width="9" height="18" rx="1" fill="#f2c00e"/><rect y="12" width="9" height="12" rx="1" fill="#ffd95b"/></svg><span>Hotels booking ana...</span></div>
  <svg class="tray" width="90" height="40" viewBox="1158 728 90 40" fill="none" stroke="#07040e" stroke-width="1.200">
    <path d="M1158.500 751l5.500-5.500 5.500 5.500M1182.500 743.500h13v9h-13z"/><path d="M1184 745h7v6h-7zM1196 746h1.500v4h-1.500z" fill="#07040e" stroke="none"/><path d="M1205.500 745.500h3l4-4v13l-4-4h-3zM1214.500 745q2 3 0 6"/><path d="M1217 743q3 5 0 10M1219 741q4 7 0 14" stroke="#211537"/><circle cx="1237" cy="748" r="7.500"/><path d="M1230 748h14M1237 740.500v15M1231 744h12M1231 752h12"/><ellipse cx="1237" cy="748" rx="3.500" ry="7.500"/><circle cx="1242" cy="753" r="3" fill="#3b2960"/><path d="M1240 751l4 4"/>
  </svg>
  <div class="clock">7:49 PM<br>2/15/2024</div>
  <svg class="note" width="16" height="16" viewBox="0 0 16 16" fill="none" stroke="#07040e" stroke-width="1.200"><path d="M.6.600h14.800v12H11L8 15.500 5 12.600H.6z"/></svg>
</footer>
</div>
</body>
</html>
```

FILE: styles.css
```css
* { box-sizing: border-box; }
body { margin: 0; font: 12px/16px "Open Sans", "Noto Sans", sans-serif; color: #252423; overflow: hidden; }
svg { display: block; flex: none; overflow: visible; }
.app { width: 1366px; height: 768px; display: flex; flex-direction: column; background: #f3f2f1; }

.titlebar { height: 34px; background: #3b3a39; color: #fff; display: flex; align-items: center; padding-left: 14px; flex: none; }
.doc-name { margin: 7px 0 0 4px; width: 297px; white-space: nowrap; letter-spacing: -.24px; font-size: 12px; }
.caret { margin-left: 6px; }
.top-search { margin-left: 183px; width: 400px; height: 24px; background: #d5d4d2; border-radius: 2px; display: flex; align-items: center; padding-left: 16px; gap: 11px; color: #24594e; font-size: 13px; letter-spacing: -.1px; }
.sign-in { margin: 2px 0 0 155px; width: 37px; letter-spacing: -.25px; white-space: nowrap; }
.avatar { margin-left: 9px; }
.win-ctl { margin-left: 31px; }

.tabs { height: 34px; background: #fafafa; display: flex; align-items: flex-start; flex: none; font-size: 14px; }
.tab { height: 31px; padding-top: 8px; line-height: 18px; letter-spacing: -.35px; white-space: nowrap; }
.t-file { margin-left: 23px; width: 58px; }
.t-home { width: 38px; margin-right: 31px; }
.t-insert { width: 67px; }
.t-model { width: 90px; letter-spacing: -.25px; }
.t-view { width: 61px; }
.t-opt { width: 88px; letter-spacing: -.25px; }
.tab.current { border-bottom: 3px solid #117865; font-weight: 600; letter-spacing: -.7px; }
.share { margin: 4px 6px 0 auto; width: 84px; height: 24px; border-radius: 4px; background: #117865; color: #fff; display: flex; align-items: center; padding-left: 7px; gap: 7px; font-size: 12px; }
.share span { width: 28px; letter-spacing: -.45px; padding-top: 1px; }

.ribbon { height: 92px; background: #fafafa; display: flex; flex: none; z-index: 2; position: relative; box-shadow: 0 3px 3px -2px rgba(0,0,0,.3); }
.group { margin-top: 2px; height: 88px; border-right: 1px solid #d0cfce; display: flex; flex-direction: column; }
.g-clip { width: 161px; }
.g-data { width: 383px; }
.g-data .buttons { padding-left: 7px; }
.g-query { width: 117px; }
.g-query .buttons { padding-left: 9px; }
.g-ins { width: 148px; }
.g-ins .buttons, .g-calc .buttons { padding-left: 8px; }
.g-calc { width: 115px; }
.g-sens { width: 74px; }
.g-share { width: 59px; }
.buttons { display: flex; height: 75px; flex: none; }
.btn { display: flex; flex-direction: column; align-items: center; padding-top: 5px; flex: none; text-align: center; white-space: nowrap; line-height: 16px; color: #484644; letter-spacing: -.42px; }
.btn span { margin-top: 3px; }
.off, .btn.off { color: #bfbebd; }
.w-paste { width: 56px; } .w38 { width: 38px; } .w40 { width: 40px; } .w42 { width: 42px; } .w44 { width: 44px; } .w48 { width: 48px; } .w49 { width: 49px; } .w50 { width: 50px; } .w52 { width: 52px; } .w55 { width: 55px; } .w56 { width: 56px; } .w58 { width: 58px; } .w73 { width: 73px; } .w76 { width: 76px; }
.chev { display: inline-block; width: 4px; height: 4px; border: solid #333; border-width: 0 1.500px 1.500px 0; transform: rotate(45deg); margin: 0 1px 3px 4px; }
.chev.lone { border-color: #aaa; margin-left: 0; }
.clip-list { padding-top: 1px; margin-left: -4px; }
.clip-list div { display: flex; align-items: center; gap: 3px; height: 24px; letter-spacing: -.38px; white-space: nowrap; }
.gname { text-align: center; font-size: 10px; line-height: 14px; margin-top: 2px; letter-spacing: -.2px; }
.collapse { margin: 80px 4px 0 auto; }

.main { display: flex; height: 543px; flex: none; }
.rail { width: 41px; border-right: 1px solid #e1dfdd; }
.rail-item { height: 40px; display: flex; align-items: center; justify-content: center; }
.rail-item.on { border-left: 3px solid #117865; padding-right: 2px; }
.center { width: 963px; display: flex; flex-direction: column; }
.stage { height: 508px; background: #fff; display: flex; padding-left: 13px; }
.report { width: 904px; height: 508px; margin-right: 13px; display: flex; flex-direction: column; box-shadow: 0 0 9px rgba(0,0,0,.2); background: radial-gradient(ellipse 575px 440px at 446px 245px, #004b96 0%, #004590 25%, #003581 52%, #002366 76%, #00125a 100%); clip-path: inset(0 -12px 0 -12px); }
.banner { width: 460px; height: 41px; margin-left: 243px; border-radius: 17px; background: #365a7b; flex: none; }
.banner-text { font: 700 18px "Open Sans"; fill: #d9645a; }
.row { display: flex; padding-left: 9px; flex: none; }
.top-row { margin-top: 37px; height: 214px; }
.bottom-row { margin-top: 13px; height: 196px; gap: 21px; }
.visual { border: 1px solid #000e2c; box-shadow: 3px 3px 7px rgba(15,18,35,.5); }
.v-bars { width: 323px; }
.mid-col { width: 274px; margin: 33px 11px 0 9px; }
.v-slicer { height: 94px; display: flex; gap: 1px; padding: 2px 0 0 18px; }
.tile { width: 118px; height: 87px; border: 2px solid #cfe2f3; background: #0e69bf; color: #fff; font-size: 15px; display: flex; align-items: center; justify-content: center; letter-spacing: -.35px; }
.cards { display: flex; gap: 21px; height: 67px; margin-top: 24px; }
.v-card { width: 132px; }
.v-card.narrow { width: 121px; }
.v-market { width: 267px; }
.mgrid { display: grid; grid-template-columns: 114px 114px; grid-auto-rows: 45px; gap: 3px 2px; margin-left: 18px; }
.mgrid div { border: 2px solid #000; background: #e6e6e6; display: flex; align-items: center; justify-content: center; font-size: 10px; color: #111; box-shadow: 0 0 0 .5px #41464c; letter-spacing: -.15px; padding-bottom: 1px; }
.v-donut { width: 464px; }
.v-ribbon { width: 399px; }
.vt { font: 700 12px Roboto, sans-serif; fill: #fff; }
.yt { font: 700 9px Roboto, sans-serif; fill: #fff; }
.xt { font: 10px Roboto, sans-serif; fill: #252d3a; }
.big { font: 500 38px Roboto, sans-serif; fill: #fff; }
.grid { stroke: #8294b8; stroke-dasharray: 1 3; fill: none; opacity: .8; }
.lab { font: 600 8px "Open Sans"; fill: #fff; }
.mid { text-anchor: middle; }
.end { text-anchor: end; }
.leg { font: 9.500px "Open Sans"; fill: #fff; }
.leg-t { font: 700 9px "Open Sans"; fill: #fff; }
.filters { width: 33px; border-left: 1px solid #aaa; display: flex; flex-direction: column; align-items: center; padding-top: 12px; gap: 14px; }
.filters span { writing-mode: vertical-rl; font-size: 15px; font-weight: 600; margin-top: -7px; letter-spacing: -.2px; }
.pages { height: 35px; display: flex; align-items: flex-start; }
.view { width: 24px; height: 31px; margin-left: 10px; padding: 6px 0 0 2px; }
.view.on { border-bottom: 3px solid #117865; }
.view.v2 { margin-left: 23px; padding-top: 4px; }
.arrows { margin: 13px 6px 0 12px; }
.page-tab { width: 77px; height: 35px; background: #fff; border: solid #aaa; border-width: 0 1px; border-bottom: 4px solid #117865; text-align: center; padding-top: 10px; letter-spacing: -.2px; }
.add { width: 39px; height: 32px; margin-top: 2px; background: #117865; display: flex; align-items: center; justify-content: center; }

.pane { border-left: 1px solid #dddbda; }
.viz { width: 181px; }
.data { width: 181px; }
.pane-head { display: flex; justify-content: space-between; padding: 9px 7px 1px 8px; }
.pane-head svg { margin-top: 3px; }
h2 { margin: 0; font-size: 15px; line-height: 20px; font-weight: 600; letter-spacing: -.1px; }
.build { padding-left: 8px; line-height: 16px; margin-top: 8px; letter-spacing: -.2px; font-weight: 500; }
.modes { display: flex; padding-left: 8px; gap: 33px; margin-top: 3px; }
.mode { width: 32px; height: 32px; padding: 3px 4px; }
.mode.on { background: #d0cecc; }
.notch { margin-top: 4px; }
.gallery { display: grid; grid-template-columns: repeat(6, 28px); grid-auto-rows: 28px; padding: 10px 0 0 11px; height: 206px; border-bottom: 1px solid #dddbda; }
.gallery svg { width: 18px; height: 18px; }
.b { fill: #83beec; stroke: #005fb7; }
.g { fill: #c8c6c4; stroke: #797775; }
.w { fill: #fff; stroke: #3b3a39; }
.l { fill: none; stroke: #3b3a39; }
.bl { fill: none; stroke: #1676bd; }
.ic { font-family: "Open Sans"; fill: #1e82c5; }
.ic.bold { font-weight: 700; }
.wells { letter-spacing: -.2px; font-size: 12px; }
.lbl { padding: 9px 0 0 12px; color: #484644; line-height: 16px; }
.well { margin: 5px 6px 0 4px; height: 28px; border: 1px dashed #bebbb8; border-radius: 2px; background: #fff; padding-left: 10px; line-height: 27px; white-space: nowrap; }
.lbl.sub { padding-top: 11px; font-weight: 600; }
.trow { display: flex; justify-content: space-between; padding: 0 22px 0 12px; margin-top: 9px; line-height: 16px; align-items: center; letter-spacing: -.3px; }
.trow.second { margin-top: 11px; }
.toggle { width: 32px; height: 16px; border-radius: 8px; border: 1px solid #605e5c; display: flex; align-items: center; font-size: 9.500px; color: #605e5c; padding-left: 4px; gap: 1px; }
.toggle::before { content: ""; width: 8px; height: 8px; border-radius: 50%; background: #605e5c; }
.toggle.on { background: #117865; border-color: #117865; color: #fff; flex-direction: row-reverse; justify-content: flex-end; gap: 4px; padding-left: 3px; }
.toggle.on::before { background: #fff; }
.well.w2 { margin-top: 10px; height: 26px; line-height: 25px; padding-left: 8px; letter-spacing: -.23px; }
.dsearch { margin: 15px 4px 0; height: 27px; border: 1px solid #666; border-radius: 2px; display: flex; align-items: center; gap: 6px; padding-left: 7px; color: #555; font-size: 13px; letter-spacing: -.2px; }
.table-row { display: flex; align-items: center; margin: 13px 0 0 9px; height: 17px; color: #484644; letter-spacing: -.25px; }
.table-row .tbl { margin: 0 6px 0 6px; }

.status { height: 24px; border-top: 1px solid #d8d6d4; display: flex; align-items: center; flex: none; color: #555; }
.pg { margin-left: 5px; letter-spacing: -.25px; }
.status .pg + svg { margin-left: auto; }
.pct { width: 24px; margin-left: 14px; letter-spacing: -.4px; }
.fit { margin: 1px 18px 0 15px; }

.taskbar { height: 41px; border-top: 1px solid #0c0812; background: linear-gradient(90deg, #2b2433, #2e2641 45%, #34285a 65%, #3b2960 85%, #37265c); display: flex; align-items: center; flex: none; color: #0a0712; }
.tk { height: 40px; display: flex; align-items: center; white-space: nowrap; }
.start { margin-left: 16px; width: 44px; }
.find { width: 43px; }
.folder { width: 152px; border-bottom: 2px solid #0078d7; padding: 2px 0 0 8px; gap: 8px; letter-spacing: -.3px; }
.apps { display: flex; gap: 25px; margin-left: 17px; }
.running { width: 160px; margin-left: 13px; background: #aba6b5; border-bottom: 2px solid #0078d7; padding: 2px 0 0 12px; gap: 6px; letter-spacing: -.27px; }
.letter { font-family: "Open Sans"; font-weight: 700; fill: #fff; font-size: 13px; }
.letter.wide { font-size: 12px; }
.tray { margin-left: 346px; }
.clock { width: 66px; text-align: center; line-height: 18px; letter-spacing: -.3px; margin-left: 1px; }
.note { margin: 0 0 2px 10px; }
```
